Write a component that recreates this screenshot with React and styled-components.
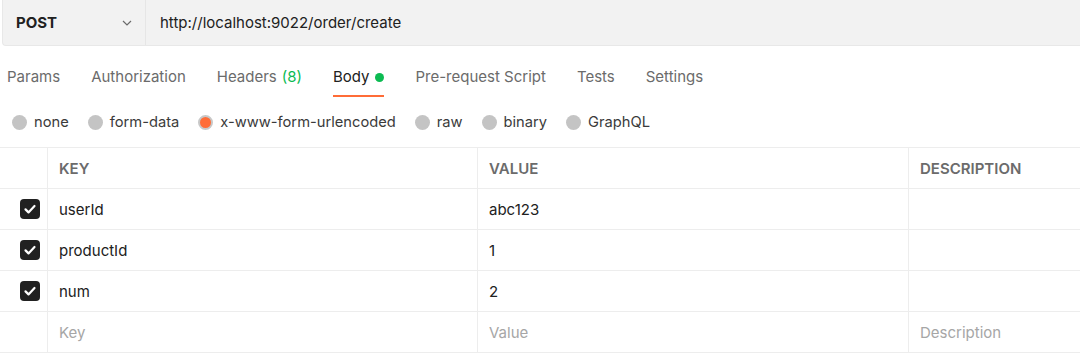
import React from "react";
import styled, { createGlobalStyle } from "styled-components";

const GlobalStyle = createGlobalStyle`
  html, body {
    margin: 0;
    padding: 0;
    background: #fff;
  }
  body {
    font-family: Inter, "Open Sans", "Liberation Sans", sans-serif;
    color: #212121;
  }
`;

const Page = styled.div`
  width: 1080px;
  height: 363px;
  overflow: hidden;
`;

const UrlBar = styled.div`
  display: flex;
  height: 45px;
  margin-left: 2px;
  background: #f2f2f2;
  border-bottom: 1px solid #e8e8e8;
  border-left: 1px solid #e8e8e8;
  border-radius: 0 0 0 4px;
`;

const Method = styled.div`
  display: flex;
  align-items: center;
  justify-content: space-between;
  width: 143px;
  box-sizing: border-box;
  padding: 0 12px 0 13px;
  border-right: 1px solid #e6e6e6;
  font-size: 15px;
  font-weight: 700;
  color: #212121;
`;

const Url = styled.div`
  display: flex;
  align-items: center;
  padding-left: 14px;
  font-size: 15px;
  color: #212121;
`;

const Tabs = styled.div`
  display: flex;
  gap: 31px;
  padding: 0 0 0 7px;
  margin-top: 20px;
  height: 31px;
`;

const Tab = styled.div`
  display: flex;
  align-items: flex-start;
  gap: 6px;
  font-size: 15px;
  line-height: 22px;
  color: ${(p) => (p.$active ? "#212121" : "#6b6b6b")};
  border-bottom: 2px solid ${(p) => (p.$active ? "#ff6c37" : "transparent")};
  height: 29px;
`;

const Count = styled.span`
  color: #0cbb52;
  margin-left: 5px;
`;

const Dot = styled.span`
  width: 9px;
  height: 9px;
  border-radius: 50%;
  background: #0cbb52;
  margin-top: 7px;
`;

const Radios = styled.div`
  display: flex;
  align-items: center;
  gap: 19px;
  padding-left: 12px;
  margin-top: 14px;
  height: 22px;
`;

const RadioItem = styled.label`
  display: flex;
  align-items: center;
  gap: 7px;
  font-size: 14.7px;
  color: #3b3b3b;
`;

const Circle = styled.span`
  width: 15px;
  height: 15px;
  box-sizing: border-box;
  border-radius: 50%;
  background: ${(p) => (p.$on ? "#ff6c37" : "#c4c4c4")};
  border: ${(p) => (p.$on ? "2px solid #c8c8c8" : "none")};
`;

const Table = styled.div`
  margin-top: 14px;
  border-top: 1px solid #ededed;
  display: grid;
  grid-template-columns: 47px 430px 431px 1fr;
`;

const Cell = styled.div`
  height: 41px;
  display: flex;
  align-items: center;
  box-sizing: border-box;
  padding-left: ${(p) => (p.$check ? "0" : "11px")};
  border-bottom: 1px solid #ededed;
  border-left: ${(p) => (p.$first ? "none" : "1px solid #ededed")};
  font-size: 15px;
  color: ${(p) => (p.$head ? "#6b6b6b" : p.$placeholder ? "#a6a6a6" : "#212121")};
  font-weight: ${(p) => (p.$head ? 600 : 400)};
`;

const Check = styled.span`
  width: 20px;
  height: 20px;
  margin-left: 20px;
  border-radius: 4px;
  background: #212121;
  display: flex;
  align-items: center;
  justify-content: center;
`;

const Chevron = () => (
  <svg width="12" height="12" viewBox="0 0 12 12" fill="none">
    <path d="M2 4l4 4 4-4" stroke="#6b6b6b" strokeWidth="1.2" />
  </svg>
);

const Tick = () => (
  <svg width="14" height="14" viewBox="0 0 14 14" fill="none">
    <path d="M2.5 7.4l3 3L11.5 4" stroke="#fff" strokeWidth="2.2" strokeLinecap="round" strokeLinejoin="round" />
  </svg>
);

const rows = [
  { key: "userId", value: "abc123" },
  { key: "productId", value: "1" },
  { key: "num", value: "2" },
];

const radios = ["none", "form-data", "x-www-form-urlencoded", "raw", "binary", "GraphQL"];

export default function App() {
  return (
    <Page>
      <GlobalStyle />
      <UrlBar>
        <Method>
          POST
          <Chevron />
        </Method>
        <Url>http://localhost:9022/order/create</Url>
      </UrlBar>
      <Tabs>
        <Tab>Params</Tab>
        <Tab>Authorization</Tab>
        <Tab>
          <span>
            Headers<Count>(8)</Count>
          </span>
        </Tab>
        <Tab $active>
          Body
          <Dot />
        </Tab>
        <Tab>Pre-request Script</Tab>
        <Tab>Tests</Tab>
        <Tab>Settings</Tab>
      </Tabs>
      <Radios>
        {radios.map((r) => (
          <RadioItem key={r}>
            <Circle $on={r === "x-www-form-urlencoded"} />
            {r}
          </RadioItem>
        ))}
      </Radios>
      <Table>
        <Cell $first $check />
        <Cell $head>KEY</Cell>
        <Cell $head>VALUE</Cell>
        <Cell $head>DESCRIPTION</Cell>
        {rows.map((r) => (
          <React.Fragment key={r.key}>
            <Cell $first $check>
              <Check>
                <Tick />
              </Check>
            </Cell>
            <Cell>{r.key}</Cell>
            <Cell>{r.value}</Cell>
            <Cell />
          </React.Fragment>
        ))}
        <Cell $first $check />
        <Cell $placeholder>Key</Cell>
        <Cell $placeholder>Value</Cell>
        <Cell $placeholder>Description</Cell>
      </Table>
    </Page>
  );
}
